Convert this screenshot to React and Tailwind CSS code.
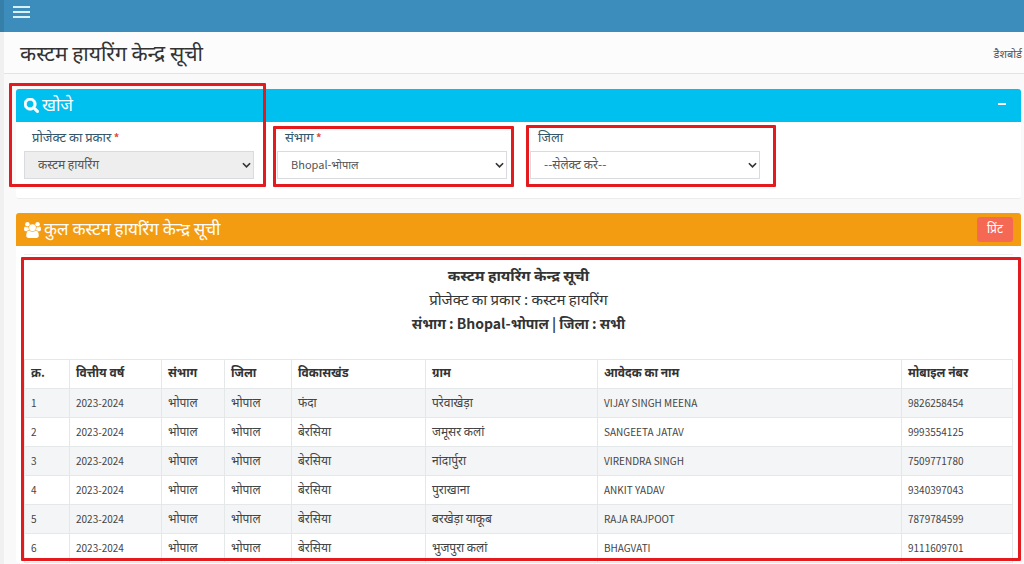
import { FaSearch } from "react-icons/fa";

const rows = [
  ["1", "2023-2024", "भोपाल", "भोपाल", "फंदा", "परेवाखेड़ा", "VIJAY SINGH MEENA", "9826258454"],
  ["2", "2023-2024", "भोपाल", "भोपाल", "बेरसिया", "जमूसर कलां", "SANGEETA JATAV", "9993554125"],
  ["3", "2023-2024", "भोपाल", "भोपाल", "बेरसिया", "नांदार्पुरा", "VIRENDRA SINGH", "7509771780"],
  ["4", "2023-2024", "भोपाल", "भोपाल", "बेरसिया", "पुराखाना", "ANKIT YADAV", "9340397043"],
  ["5", "2023-2024", "भोपाल", "भोपाल", "बेरसिया", "बरखेड़ा याकूब", "RAJA RAJPOOT", "7879784599"],
  ["6", "2023-2024", "भोपाल", "भोपाल", "बेरसिया", "भुजपुरा कलां", "BHAGVATI", "9111609701"],
];

const columns = [
  { title: "क्र.", width: "w-[45px]", latin: true },
  { title: "वित्तीय वर्ष", width: "w-[92px]", latin: true },
  { title: "संभाग", width: "w-[63px]" },
  { title: "जिला", width: "w-[67px]" },
  { title: "विकासखंड", width: "w-[134px]" },
  { title: "ग्राम", width: "w-[172px]" },
  { title: "आवेदक का नाम", width: "", latin: true },
  { title: "मोबाइल नंबर", width: "w-[111px]", latin: true },
];

const SHOULDER =
  "M657 896q-162 5-265 128h-134q-82 0-138-40.5t-56-118.5q0-353 124-353 6 0 43.5 21t97.5 42.5 119 21.5q67 0 133-23-5 37-5 66 0 140 81 256z";

function GroupIcon() {
  return (
    <svg viewBox="64 0 1920 1792" className="h-4 w-[17px]" fill="currentColor" aria-hidden="true">
      <circle cx="448" cy="256" r="256" />
      <circle cx="1600" cy="256" r="256" />
      <circle cx="1024" cy="640" r="384" />
      <path d={SHOULDER} />
      <path d={SHOULDER} transform="matrix(-1 0 0 1 2048 0)" />
      <path d="M1728 1533q0 120-73 189.500t-194 69.500h-874q-121 0-194-69.500t-73-189.500q0-53 3.500-103.500t14-109 26.500-108.500 43-97.500 62-81 85.500-53.500 111.500-20q10 0 43 21.500t73 48 107 48 135 21.500 135-21.500 107-48 73-48 43-21.500q61 0 111.500 20t85.500 53.500 62 81 43 97.500 26.500 108.500 14 109 3.500 103.500z" />
    </svg>
  );
}

function Highlight({ className }) {
  return (
    <div
      aria-hidden="true"
      className={`pointer-events-none absolute z-10 rounded-[1px] border-[3px] border-[#e31b1f] ${className}`}
    />
  );
}

function Field({ id, label, required, value, size, disabled, highlight }) {
  return (
    <div className="relative flex flex-col gap-1">
      <label htmlFor={id} className="h-5 pl-2 text-[13px] leading-5 text-[#33566b]">
        {label}
        {required && <span className="text-[11px] leading-none font-bold text-[#dd4b39]"> *</span>}
      </label>
      <div className="relative">
        <select
          id={id}
          disabled={disabled}
          className={`block h-7 w-full appearance-none border border-[#d8dbe0] bg-white pb-[2px] pl-[13px] text-[#555] opacity-100 disabled:bg-[#eee] ${size}`}
        >
          <option>{value}</option>
        </select>
        <svg
          viewBox="0 0 10 6"
          className="pointer-events-none absolute top-[11px] right-[3px] h-[6px] w-[9px]"
          fill="none"
          stroke="#333"
          strokeWidth="1.8"
        >
          <path d="M1 1l4 4 4-4" />
        </svg>
      </div>
      <Highlight className={highlight} />
    </div>
  );
}

export default function App() {
  return (
    <div className="flex h-screen overflow-hidden bg-[#f9f9f9] font-['Noto_Sans_CJK_SC','Noto_Sans',sans-serif] text-[#333]">
      <aside className="w-1 shrink-0 bg-[#f0f0f0]">
        <div className="h-8 bg-[#367fa9]" />
      </aside>
      <div className="min-w-0 flex-1">
        <nav className="h-8 bg-[#3c8dbc] px-[9px] pt-[6px]">
          <button type="button" aria-label="Menu" className="flex flex-col gap-[3px]">
            <span className="h-[2px] w-[17px] bg-[#d8f0fa]" />
            <span className="h-[2px] w-[17px] bg-[#d8f0fa]" />
            <span className="h-[2px] w-[17px] bg-[#d8f0fa]" />
          </button>
        </nav>
        <header className="flex h-[42px] items-center justify-between border-b border-[#e4e4e4] bg-[#fcfcfc] pr-[2px] pl-4">
          <h1 className="pb-[2px] text-[21px] leading-8">कस्टम हायरिंग केन्द्र सूची</h1>
          <a href="#" className="text-[11px] leading-4 text-[#555]">डैशबोर्ड</a>
        </header>

        <main className="flex flex-col gap-[14px] pt-[15px] pr-[3px] pl-3">
          <section className="rounded-[3px] border-b border-[#ececec] bg-white">
            <div className="flex h-[33px] items-center justify-between rounded-t-[3px] bg-[#00c0ef] px-2 text-white">
              <h2 className="flex items-center gap-[3px] text-[17px] leading-6">
                <FaSearch className="size-[15px]" stroke="currentColor" strokeWidth="24" />
                <span className="pb-1">खोजे</span>
              </h2>
              <button type="button" aria-label="Collapse" className="px-[7px] pt-2 pb-3">
                <span className="block h-[2px] w-2 bg-white" />
              </button>
            </div>
            <form className="grid grid-cols-4 gap-[23px] px-2 pt-[5px] pb-[19px]">
              <Field id="project" label="प्रोजेक्ट का प्रकार" required disabled size="text-xs" value="कस्टम हायरिंग" highlight="-top-11 -right-[12px] -bottom-2 -left-[15px]" />
              <Field id="division" label="संभाग" required size="text-[11px]" value="Bhopal-भोपाल" highlight="-top-[1px] -right-[7px] -bottom-2 -left-1" />
              <Field id="district" label="जिला" size="text-xs" value="--सेलेक्ट करे--" highlight="-top-[2px] -right-4 -bottom-2 -left-1" />
            </form>
          </section>

          <section className="rounded-[3px] bg-white">
            <div className="flex h-[33px] items-center justify-between rounded-t-[3px] bg-[#f39c12] px-2 text-white">
              <h2 className="flex items-center gap-[3px] text-[17px] leading-6">
                <GroupIcon />
                <span className="pb-1">कुल कस्टम हायरिंग केन्द्र सूची</span>
              </h2>
              <button type="button" className="h-[25px] w-9 rounded-[3px] bg-[#f56954] pb-1 text-xs leading-5">
                प्रिंट
              </button>
            </div>
            <div className="relative px-2 pt-2">
              <Highlight className="top-[11px] right-0 bottom-[2px] left-[5px]" />
              <div className="border-t border-[#eee] pt-2 pb-6 text-center text-[15px] leading-6">
                <p className="font-bold">कस्टम हायरिंग केन्द्र सूची</p>
                <p>प्रोजेक्ट का प्रकार : कस्टम हायरिंग</p>
                <p className="text-sm leading-6 font-bold">संभाग : Bhopal-भोपाल | जिला : सभी</p>
              </div>
              <table className="w-full table-fixed border-collapse border border-[#e4e8e8] text-left">
                <thead>
                  <tr className="h-[29px]">
                    {columns.map((c) => (
                      <th key={c.title} className={`border border-[#e4e8e8] px-[6px] pb-1 text-xs leading-4 font-bold ${c.width}`}>
                        {c.title}
                      </th>
                    ))}
                  </tr>
                </thead>
                <tbody>
                  {rows.map((r) => (
                    <tr key={r[0]} className="h-[29px] odd:bg-[#f3f5f6]">
                      {r.map((v, i) => (
                        <td
                          key={columns[i].title}
                          className={`border border-[#e4e8e8] px-[6px] leading-4 text-[#444] ${columns[i].latin ? "text-[10px]" : "pb-[2px] text-xs"}`}
                        >
                          {v}
                        </td>
                      ))}
                    </tr>
                  ))}
                </tbody>
              </table>
            </div>
          </section>
        </main>
      </div>
    </div>
  );
}
